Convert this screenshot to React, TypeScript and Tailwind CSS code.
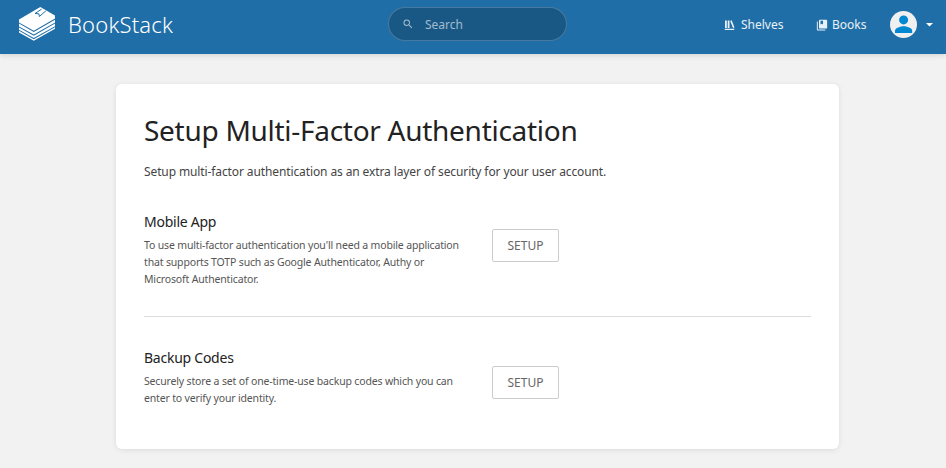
import type { ReactNode } from "react";

function Logo() {
  return (
    <svg className="h-[36px] w-[38px] shrink-0" viewBox="0 0 38 36" fill="#fff">
      <path d="M1 13.6 22.3 1 37 9.4V12.6L15.8 24.8 1 16.6Z" />
      <path d="M1 17.6 15.8 26 37 13.8V16.6L15.8 28.6 1 20.4Z" />
      <path d="M1 21.4 15.8 29.8 37 17.6V20.2L15.8 32 1 23.8Z" />
      <path d="M1 24.8 15.8 33.2 37 21.2V22.8L15.8 34.8 1 26.4Z" />
      <path d="M23.6 3.2 17 7.5l3.9.3.5 2.7 6.4-5.6" fill="none" stroke="#206ea7" strokeWidth="1" />
    </svg>
  );
}

function Method({ title, children, className, buttonClass }: { title: string; children: ReactNode; className: string; buttonClass: string }) {
  return (
    <section className={`flex items-start ${className}`}>
      <div className="w-[348px] shrink-0">
        <h2 className="text-[14px] leading-[20px] tracking-[-0.25px] text-[#222]">{title}</h2>
        <p className="mt-[5px] text-[10.5px] leading-[17px] tracking-[-0.16px] whitespace-nowrap text-[#555]">{children}</p>
      </div>
      <button className={`h-[33px] w-[67px] rounded-[2px] border border-[#ccc] text-[12px] text-[#666] ${buttonClass}`}>SETUP</button>
    </section>
  );
}

export default function App() {
  return (
    <div className="h-[468px] overflow-hidden bg-[#f2f2f2] font-['Noto_Sans',sans-serif] text-[#444]">
      <header className="flex h-[54px] items-start bg-[#206ea7] text-white shadow-[0_1px_6px_rgba(0,0,0,0.14)]">
        <a className="flex w-[388px] items-center pt-[6px] pl-[18px]">
          <Logo />
          <span className="ml-[12px] text-[22px] leading-[36px] font-light tracking-[0.18px]">BookStack</span>
        </a>
        <div className="mt-[7px] flex h-[34px] w-[179px] items-center rounded-full border border-white/20 bg-black/20 pl-[13px] text-white/60">
          <svg className="size-[12px]" viewBox="0 0 24 24" fill="currentColor"><path d="M15.5 14h-.79l-.28-.27A6.47 6.47 0 0 0 16 9.5 6.5 6.5 0 1 0 9.5 16c1.61 0 3.09-.59 4.23-1.57l.27.28v.79l5 4.99L20.49 19l-4.99-5zm-6 0C7.01 14 5 11.99 5 9.5S7.01 5 9.5 5 14 7.01 14 9.5 11.99 14 9.5 14z" /></svg>
          <span className="mt-px ml-[11px] text-[12px]">Search</span>
        </div>
        <nav className="flex h-[49px] flex-1 items-center pl-[157px] text-[12px] text-white/90">
          <a className="flex w-[92px] items-center">
            <svg className="size-[12px]" viewBox="0 0 24 24" fill="currentColor"><path d="M1.5 19.6h19V22h-19zM2 3h3.6v15H2zM7.4 3H11v15H7.4zM12.4 3.9l3-1.2L21 16.8l-3 1.2z" /></svg>
            <span className="ml-[5px]">Shelves</span>
          </a>
          <a className="flex w-[74px] items-center">
            <svg className="size-[12px]" viewBox="0 0 24 24" fill="currentColor"><path fillRule="evenodd" d="M20.5 1.7H8A1.9 1.9 0 0 0 6 3.5v13.8A1.9 1.9 0 0 0 8 19.2h12.5a1.9 1.9 0 0 0 1.8-1.9V3.5a1.9 1.9 0 0 0-1.8-1.8zM9 3.5h5v7.3l-2.5-1.5L9 10.8z" /><path d="M1.7 5.2v16a1.9 1.9 0 0 0 1.9 1.8h15v-1.8h-15v-16z" /></svg>
            <span className="ml-[4px]">Books</span>
          </a>
          <svg className="size-[27px]" viewBox="0 0 27 27"><circle cx="13.5" cy="13.5" r="13.5" fill="#f0f0f0" /><g fill="#0288d1"><circle cx="13.6" cy="8.9" r="4.5" /><path d="M5 22v-2.2c0-3 5.7-4.5 8.6-4.5s8.6 1.5 8.6 4.5V22Z" /></g></svg>
          <svg className="ml-[9px] h-[4px] w-[7px]" viewBox="0 0 7 4" fill="#fff"><path d="M0 0h7L3.5 3.5Z" /></svg>
        </nav>
      </header>
      <main className="mt-[30px] ml-[116px] h-[365px] w-[723px] rounded-[6px] bg-white px-[28px] pt-[27px] shadow-[0_1px_6px_-1px_rgba(0,0,0,0.13)]">
        <h1 className="text-[28px] leading-[38px] font-normal tracking-[-0.28px] whitespace-nowrap text-[#222]">Setup Multi-Factor Authentication</h1>
        <p className="mt-[13px] text-[12px] leading-[20px] tracking-[-0.11px] whitespace-nowrap">Setup multi-factor authentication as an extra layer of security for your user account.</p>
        <Method title="Mobile App" className="mt-[30px] h-[76px]" buttonClass="mt-[17px]">To use multi-factor authentication you'll need a mobile application<br />that supports TOTP such as Google Authenticator, Authy or<br />Microsoft Authenticator.</Method>
        <hr className="mt-[28px] border-[#ddd]" />
        <Method title="Backup Codes" className="mt-[31px] h-[58px]" buttonClass="mt-[18px]">Securely store a set of one-time-use backup codes which you can<br />enter to verify your identity.</Method>
      </main>
    </div>
  );
}
